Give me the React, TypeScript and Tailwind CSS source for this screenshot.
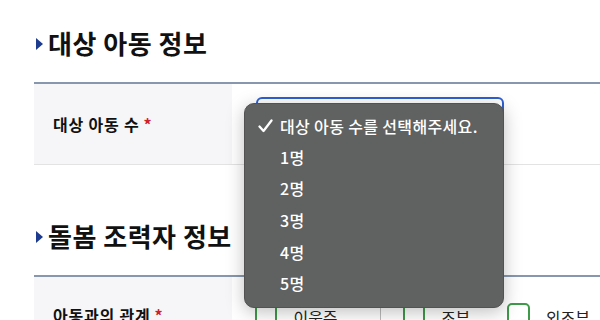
const font = { fontFamily: '"Noto Sans CJK KR", "Noto Sans", sans-serif' };

const SectionTitle = ({ title }: { title: string }) => (
  <h2 className="flex items-center gap-[5px] text-[26px] font-bold tracking-[0.5px] text-[#111] leading-none">
    <span className="ml-[2px] w-0 h-0 border-y-[6px] border-y-transparent border-l-[7px] border-l-[#1d3b8f] mt-[2px]"></span>
    {title}
  </h2>
);

const CheckMark = () => (
  <svg width="15" height="14" viewBox="0 0 15 14" className="mr-[7px] mt-[1px]">
    <path d="M1.5 7.5 L5.5 12 L13.5 1.5" fill="none" stroke="white" strokeWidth="2.3" strokeLinecap="round" strokeLinejoin="round" />
  </svg>
);

const options = ["1명", "2명", "3명", "4명", "5명"];

const App = () => {
  return (
    <div className="relative w-[600px] h-[320px] overflow-hidden bg-white" style={font}>
      <div className="pl-[34px] pt-[30px]">
        {/* 대상 아동 정보 */}
        <SectionTitle title="대상 아동 정보" />
        <div className="mt-[26px] border-t-2 border-[#8797ad]">
          <div className="grid grid-cols-[198px_1fr] h-[81px] border-b border-[#e3e3e3]">
            <div className="bg-[#f6f6f8] flex items-center pl-[19px] text-[16px] font-bold tracking-[0.8px] text-[#111]">
              대상 아동 수<span className="text-[#d0202b] ml-[4px]">*</span>
            </div>
            <div className="pl-[24px] pt-[13px]">
              <div className="w-[248px] h-[40px] rounded-[6px] border-2 border-[#2f5fd0]"></div>
            </div>
          </div>
        </div>

        {/* 돌봄 조력자 정보 */}
        <div className="mt-[58px]">
          <SectionTitle title="돌봄 조력자 정보" />
        </div>
        <div className="mt-[26px] border-t-2 border-[#8797ad]">
          <div className="grid grid-cols-[198px_1fr] h-[81px]">
            <div className="bg-[#f6f6f8] flex items-start pt-[26px] pl-[19px] text-[16px] font-bold tracking-[0.8px] text-[#111]">
              아동과의 관계<span className="text-[#d0202b] ml-[4px]">*</span>
            </div>
            <div className="flex items-start pl-[23px] pt-[26px] text-[16px] text-[#222]">
              <div className="flex items-start gap-[16px]">
                <span className="w-[24px] h-[24px] rounded-[5px] border-2 border-[#3f9a4a]"></span>
                <span className="mt-[2px]">이웃주민</span>
              </div>
              <span className="w-px h-[24px] bg-[#bbb] ml-[32px]"></span>
              <div className="flex items-start gap-[16px] ml-[22px]">
                <span className="w-[24px] h-[24px] rounded-[5px] border-2 border-[#3f9a4a]"></span>
                <span className="mt-[2px]">조부모</span>
              </div>
              <div className="flex items-start gap-[16px] ml-[26px]">
                <span className="w-[24px] h-[24px] rounded-[5px] border-2 border-[#3f9a4a]"></span>
                <span className="mt-[2px]">외조부모</span>
              </div>
            </div>
          </div>
        </div>
      </div>

      {/* dropdown menu */}
      <div className="absolute left-[244px] top-[103px] w-[260px] h-[205px] rounded-[10px] bg-[#606161] border border-[#525252] shadow-[0_4px_18px_rgba(0,0,0,0.25)] pt-[6px] text-white text-[16px] font-medium tracking-[0.35px]">
        <div className="flex items-center h-[31px] pl-[13px]">
          <CheckMark />
          <span>대상 아동 수를 선택해주세요.</span>
        </div>
        {options.map((o) => (
          <div key={o} className="flex items-center h-[31.6px] pl-[35px]">
            {o}
          </div>
        ))}
      </div>
    </div>
  );
};

export default App;
